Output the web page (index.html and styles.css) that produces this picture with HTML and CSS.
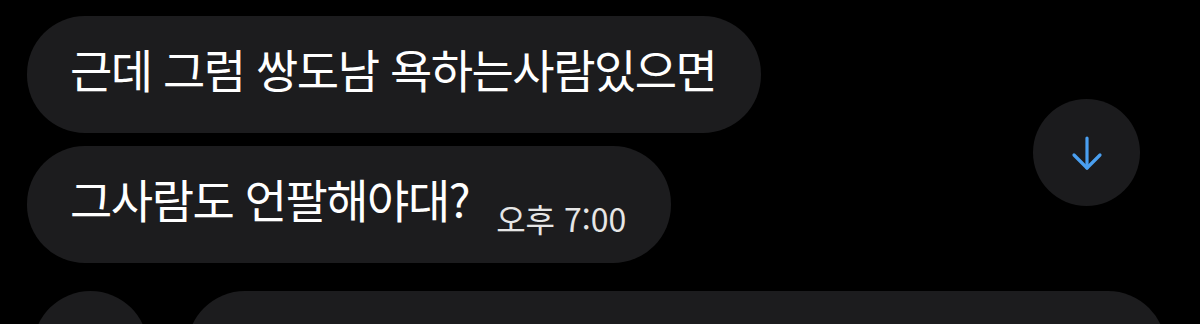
FILE: index.html
```html
<!DOCTYPE html>
<html lang="ko">
<head>
  <meta charset="UTF-8">
  <meta name="viewport" content="width=device-width, initial-scale=1.0">
  <title>Chat</title>
  <link rel="stylesheet" href="styles.css">
</head>
<body>

  <div class="chat">
    <div class="msg-list">
      <div class="bubble">
        <span class="msg-text">근데 그럼 쌍도남 욕하는사람있으면</span>
      </div>
      <div class="bubble">
        <span class="msg-text">그사람도 언팔해야대?</span>
        <span class="msg-time">오후 7:00</span>
      </div>
    </div>

    <!-- next message, cut off at the bottom -->
    <div class="msg-row">
      <div class="avatar"></div>
      <div class="bubble wide"></div>
    </div>

    <button class="scroll-down" aria-label="scroll down">
      <svg width="32" height="36" viewBox="0 0 32 36" fill="none" stroke="#4a9ff0" stroke-width="3.2" stroke-linecap="round" stroke-linejoin="round">
        <path d="M16 3 V33" />
        <path d="M3 20 L16 33 L29 20" />
      </svg>
    </button>
  </div>

</body>
</html>
```

FILE: styles.css
```css
* {
  box-sizing: border-box;
  margin: 0;
  padding: 0;
}

body {
  background: #000000;
  font-family: "Noto Sans CJK KR", "Noto Sans", sans-serif;
  color: #ffffff;
  height: 324px;
  overflow: hidden;
}

.chat {
  position: relative;
  padding: 16px 0 0 27px;
}

.msg-list {
  display: flex;
  flex-direction: column;
  align-items: flex-start;
  gap: 13px;
}

.bubble {
  height: 117px;
  border-radius: 58px;
  background: #1c1c1e;
  display: flex;
  align-items: center;
  padding: 0 45px 0 43px;
}

.msg-text {
  font-size: 46px;
  letter-spacing: -1.5px;
  line-height: 1;
  padding-bottom: 14px;
}

.msg-time {
  font-size: 32px;
  color: #e6e6e6;
  margin-left: 27px;
  margin-top: 26px;
}

.msg-row {
  display: flex;
  align-items: flex-start;
  gap: 39px;
  margin-top: 28px;
  margin-left: 6px;
}

.avatar {
  width: 115px;
  height: 115px;
  border-radius: 50%;
  background: #1c1c1e;
  flex-shrink: 0;
}

.bubble.wide {
  width: 979px;
}

.scroll-down {
  position: absolute;
  left: 1033px;
  top: 99px;
  width: 107px;
  height: 107px;
  border-radius: 50%;
  border: none;
  background: #1b1b1d;
  display: flex;
  align-items: center;
  justify-content: center;
}
```
